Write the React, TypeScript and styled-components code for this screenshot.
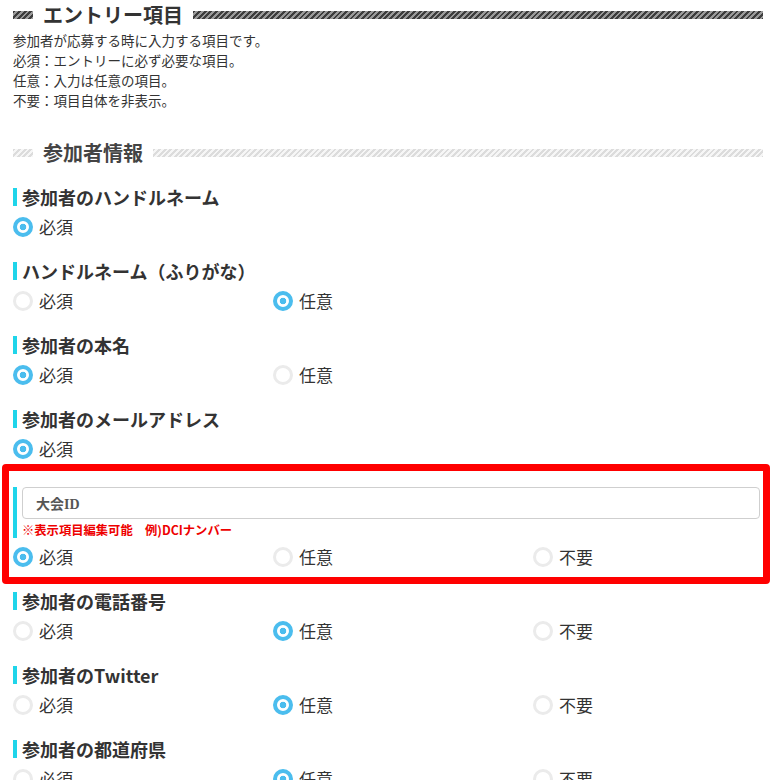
import React from "react";
import styled, { createGlobalStyle, css } from "styled-components";

type Choice = "required" | "optional" | "hidden";

type FieldItem = {
  label: string;
  options: Choice[];
  value: Choice;
  editable?: boolean;
};

const CHOICE_TEXT: Record<Choice, string> = {
  required: "必須",
  optional: "任意",
  hidden: "不要",
};

const FIELDS: FieldItem[] = [
  { label: "参加者のハンドルネーム", options: ["required"], value: "required" },
  { label: "ハンドルネーム（ふりがな）", options: ["required", "optional"], value: "optional" },
  { label: "参加者の本名", options: ["required", "optional"], value: "required" },
  { label: "参加者のメールアドレス", options: ["required"], value: "required" },
  { label: "大会ID", options: ["required", "optional", "hidden"], value: "required", editable: true },
  { label: "参加者の電話番号", options: ["required", "optional", "hidden"], value: "optional" },
  { label: "参加者のTwitter", options: ["required", "optional", "hidden"], value: "optional" },
  { label: "参加者の都道府県", options: ["required", "optional", "hidden"], value: "optional" },
];

const GlobalStyle = createGlobalStyle`
  body {
    margin: 0;
    background: #fff;
    color: #333;
    font-family: "Noto Sans CJK JP", "Noto Sans", sans-serif;
  }
`;

const Page = styled.main`
  padding: 0 10px 0 13px;
  overflow: hidden;
`;

const HeadingRow = styled.div`
  display: flex;
  align-items: center;
  gap: 10px;
  height: 30px;
`;

const Stripe = styled.span<{ $light?: boolean; $grow?: boolean }>`
  display: block;
  height: 8px;
  width: 20px;
  flex: ${(p) => (p.$grow ? "1 1 auto" : "none")};
  background: ${(p) =>
    p.$light
      ? "repeating-linear-gradient(135deg, #dcdcdc 0 2px, #f6f6f6 2px 4px)"
      : "repeating-linear-gradient(135deg, #3d3d3d 0 2px, #9a9a9a 2px 4px)"};
`;

const Title = styled.h2<{ $light?: boolean }>`
  margin: 0;
  font-size: 20px;
  line-height: 30px;
  font-weight: 700;
  color: ${(p) => (p.$light ? "#444" : "#333")};
  white-space: nowrap;
`;

const Intro = styled.p`
  margin: 0;
  font-size: 13.5px;
  line-height: 20px;
  color: #333;
`;

const SubHeading = styled(HeadingRow)`
  margin: 28px 0 17px;
`;

const Field = styled.section<{ $highlight?: boolean }>`
  position: relative;
  margin-bottom: 20px;

  ${(p) =>
    p.$highlight &&
    css`
      &::after {
        content: "";
        position: absolute;
        top: -17px;
        bottom: -15px;
        left: -11px;
        right: -7px;
        border: 7px solid #ff0000;
        border-radius: 4px;
        pointer-events: none;
      }
    `}
`;

const FieldLabel = styled.h3`
  display: flex;
  align-items: center;
  gap: 5px;
  margin: 0 0 6px;
  font-size: 18px;
  line-height: 24px;
  font-weight: 700;
  color: #333;

  &::before {
    content: "";
    flex: none;
    width: 4px;
    height: 18px;
    background: #1fd5ea;
  }
`;

const EditHead = styled.div`
  display: flex;
  gap: 5px;
  padding-top: 6px;
  margin-bottom: 7px;
`;

const Bar = styled.span`
  flex: none;
  width: 4px;
  background: #1fd5ea;
`;

const EditBody = styled.div`
  flex: 1;
  display: flex;
  flex-direction: column;
  margin-right: 3px;
`;

const NameInput = styled.input`
  box-sizing: border-box;
  height: 32px;
  width: 100%;
  padding: 0 13px;
  border: 1px solid #cfcfcf;
  border-radius: 4px;
  background: #fff;
  color: #555;
  font-family: "Liberation Serif", "Noto Sans CJK JP", serif;
  font-size: 14px;
  font-weight: 700;
  outline: none;
`;

const Note = styled.p`
  margin: 3px 0 0;
  font-size: 12.3px;
  line-height: 16px;
  font-weight: 700;
  color: #ee0000;
  white-space: nowrap;
`;

const Options = styled.div`
  display: grid;
  grid-template-columns: repeat(3, 260px);
  height: 24px;
`;

const Option = styled.label`
  display: flex;
  align-items: center;
  gap: 6px;
  font-size: 17px;
  line-height: 24px;
  color: #333;
`;

const Radio = styled.span<{ $checked?: boolean }>`
  flex: none;
  box-sizing: border-box;
  width: 20px;
  height: 20px;
  border-radius: 50%;
  ${(p) =>
    p.$checked
      ? css`
          border: 4px solid #4bbdee;
          background: radial-gradient(circle, #4bbdee 0 3px, #fff 3.6px);
        `
      : css`
          border: 3px solid #ebebeb;
          background: #fff;
        `}
`;

const App = () => {
  return (
    <Page>
      <GlobalStyle />

      {/* Section title */}
      <HeadingRow>
        <Stripe />
        <Title>エントリー項目</Title>
        <Stripe $grow />
      </HeadingRow>
      <Intro>
        参加者が応募する時に入力する項目です。
        <br />
        必須：エントリーに必ず必要な項目。
        <br />
        任意：入力は任意の項目。
        <br />
        不要：項目自体を非表示。
      </Intro>

      <SubHeading>
        <Stripe $light />
        <Title $light>参加者情報</Title>
        <Stripe $light $grow />
      </SubHeading>

      {FIELDS.map((f) => (
        <Field key={f.label} $highlight={f.editable}>
          {f.editable ? (
            <EditHead>
              <Bar />
              <EditBody>
                <NameInput defaultValue={f.label} readOnly />
                <Note>※表示項目編集可能　例)DCIナンバー</Note>
              </EditBody>
            </EditHead>
          ) : (
            <FieldLabel>{f.label}</FieldLabel>
          )}
          <Options>
            {f.options.map((o) => (
              <Option key={o}>
                <Radio $checked={f.value === o} />
                {CHOICE_TEXT[o]}
              </Option>
            ))}
          </Options>
        </Field>
      ))}
    </Page>
  );
};

export default App;
